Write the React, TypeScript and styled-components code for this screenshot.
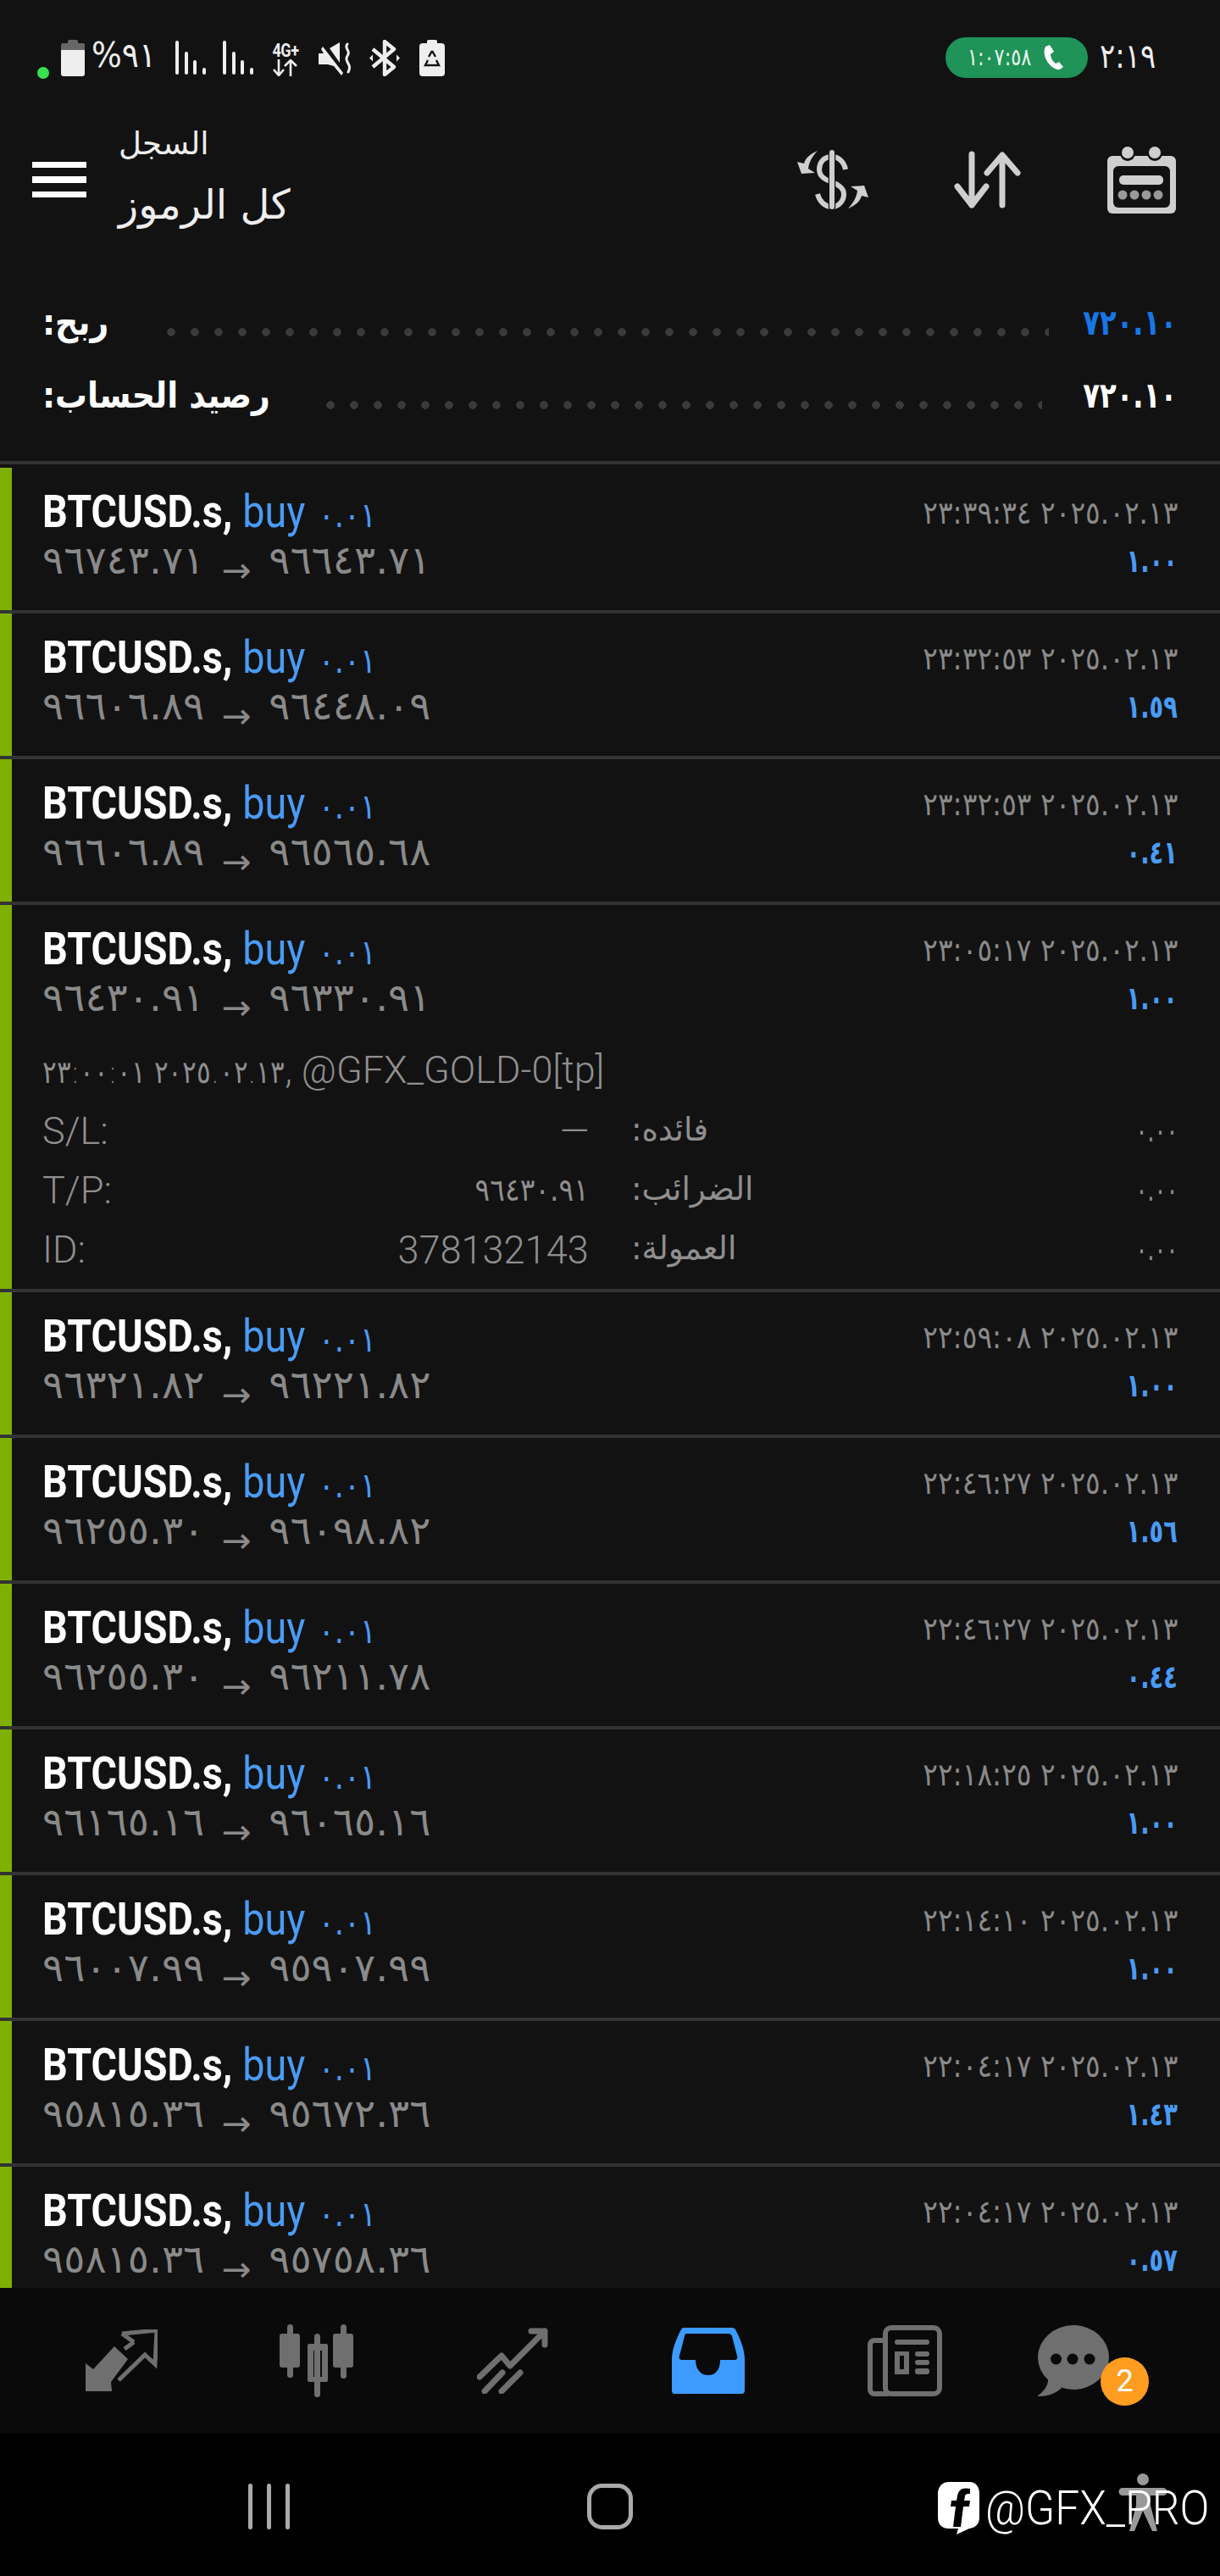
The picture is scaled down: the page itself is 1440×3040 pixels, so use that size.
import React from "react";
import styled, { createGlobalStyle } from "styled-components";

const Global = createGlobalStyle`
  html, body { margin: 0; padding: 0; background: #000; }
  body { font-family: Roboto, "DejaVu Sans", sans-serif; }
`;

const Page = styled.div`
  width: 1440px;
  height: 3040px;
  position: relative;
  display: flex;
  flex-direction: column;
  overflow: hidden;
  background: #121212;
  color: #fff;
`;

/* squeezed text: the reference uses a condensed face */
const Num = styled.span<{ $sx?: number; $right?: boolean }>`
  display: inline-block;
  white-space: nowrap;
  direction: ltr;
  unicode-bidi: bidi-override;
  font-family: "DejaVu Sans", sans-serif;
  transform: scaleX(${(p) => p.$sx ?? 0.8});
  transform-origin: ${(p) => (p.$right ? "right" : "left")} center;
`;

const StatusBar = styled.div`
  height: 132px;
  display: flex;
  align-items: flex-start;
  justify-content: space-between;
  padding: 44px 74px 0 44px;
  box-sizing: border-box;
  flex: none;
`;
const StatusGroup = styled.div`
  display: flex;
  align-items: flex-start;
`;
const Slot = styled.div<{ $ml: number; $mt?: number }>`
  margin-left: ${(p) => p.$ml}px;
  margin-top: ${(p) => p.$mt ?? 3}px;
  display: flex;
  svg { display: block; }
`;
const Percent = styled(Num)`
  font-size: 41px;
  line-height: 40px;
  color: #eee;
  width: 75px;
`;
const FourG = styled.div`
  width: 42px;
  display: flex;
  flex-direction: column;
  align-items: center;
  font: 700 22px/20px Roboto, sans-serif;
  color: #eee;
`;
const FourGText = styled.span`
  display: inline-block;
  transform: scaleX(0.82);
  letter-spacing: -0.5px;
`;
const Pill = styled.div`
  width: 168px;
  height: 48px;
  border-radius: 24px;
  background: #1f9358;
  display: flex;
  align-items: center;
  gap: 16px;
  padding-left: 26px;
  box-sizing: border-box;
  svg { flex: none; display: block; }
`;
const PillTime = styled(Num)`
  font-size: 28px;
  line-height: 48px;
  width: 74px;
  color: #e8f5ee;
`;
const Clock = styled(Num)`
  margin-left: 14px;
  width: 68px;
  font-size: 40px;
  line-height: 44px;
  color: #eee;
`;

const Header = styled.div`
  height: 146px;
  flex: none;
  display: flex;
  align-items: center;
  padding: 0 52px 0 38px;
  box-sizing: border-box;
`;
const Burger = styled.div`
  width: 64px;
  display: flex;
  flex-direction: column;
  gap: 10px;
  margin: 14px 38px 0 0;
`;
const BurgerBar = styled.span`
  height: 7.5px;
  background: #fff;
`;
const Titles = styled.div`
  flex: 1;
  align-self: flex-start;
  padding-top: 15px;
  display: flex;
  flex-direction: column;
  align-items: flex-start;
  font-family: "DejaVu Sans", sans-serif;
  direction: ltr;
`;
const TitleSmall = styled.div`
  font-size: 37px;
  line-height: 46px;
  margin-bottom: 10px;
  color: #eee;
`;
const TitleBig = styled.div`
  font-size: 48px;
  line-height: 76px;
  color: #eee;
`;
const HeadIcons = styled.div`
  display: flex;
  align-items: center;
  padding-top: 14px;
  svg { display: block; }
`;

const SummaryWrap = styled.div`
  flex: none;
  height: 266px;
  box-sizing: border-box;
  padding: 60px 51px 0 50px;
  display: flex;
  flex-direction: column;
`;
const SumRow = styled.div`
  height: 86px;
  display: flex;
  align-items: center;
`;
const SumLabel = styled.div`
  direction: rtl;
  font: 700 42px/50px "DejaVu Sans", sans-serif;
  color: #fff;
  white-space: nowrap;
  transform: scaleX(0.9);
  transform-origin: left center;
`;
const Leader = styled.div<{ $l: number; $r: number }>`
  flex: 1;
  height: 10px;
  margin: 22px ${(p) => p.$r}px 0 ${(p) => p.$l}px;
  background-image: radial-gradient(circle at 5px 5px, #3a3a3a 4.5px, transparent 5px);
  background-size: 28px 10px;
  background-repeat: repeat-x;
`;
const SumValue = styled(Num)<{ $blue?: boolean }>`
  font-size: 42px;
  line-height: 50px;
  font-weight: 700;
  color: ${(p) => (p.$blue ? "#1677e8" : "#fff")};
`;
const Rule = styled.div`
  height: 4px;
  background: #333;
  flex: none;
`;
const List = styled.div`
  flex: 1;
  min-height: 0;
  overflow: hidden;
  padding-top: 4px;
`;
const Row = styled.div`
  background: linear-gradient(#7fb000, #7fb000) left top / 14px 100% no-repeat;
  background-origin: padding-box;
  border-bottom: 4px solid #333;
  padding: 24px 50px 0 50px;
  box-sizing: border-box;
  min-height: 172px;
  &:last-child { border-bottom: none; }
`;
const Line = styled.div<{ $h: number }>`
  display: flex;
  justify-content: space-between;
  align-items: center;
  height: ${(p) => p.$h}px;
`;
const Symbol = styled.span`
  display: inline-block;
  white-space: nowrap;
  font: 700 54px/60px Roboto, sans-serif;
  color: #fff;
  transform: scaleX(0.864);
  transform-origin: left center;
`;
const Buy = styled.span`
  font-weight: 400;
  color: #4a9bf5;
  margin-left: 14px;
`;
const Lot = styled.span`
  font: 400 41px/60px "DejaVu Sans", sans-serif;
  color: #4a9bf5;
  margin-left: 18px;
  direction: ltr;
  unicode-bidi: bidi-override;
`;
const DateText = styled(Num)`
  font-size: 37px;
  line-height: 56px;
  color: #8a8a8a;
`;
const Prices = styled(Num)`
  font-size: 46px;
  line-height: 56px;
  color: #8a8a8a;
`;
const Arrow = styled.span`
  display: inline-block;
  margin: 0 20px;
  font-size: 41px;
  transform: translateY(10px);
`;
const Profit = styled(Num)`
  font-size: 38px;
  line-height: 56px;
  font-weight: 700;
  color: #4a9bf5;
`;
const Details = styled.div`
  padding: 32px 0 11px;
  color: #8f8f8f;
`;
const Comment = styled.div`
  height: 56px;
  margin-bottom: 8px;
  display: flex;
  align-items: center;
  font: 300 45px/56px Roboto, sans-serif;
`;
const CommentInner = styled.span`
  display: inline-block;
  white-space: nowrap;
`;
const CommentDate = styled(Num)`
  font-size: 37px;
  line-height: 56px;
  margin-right: -54px;
`;
const DetailGrid = styled.div`
  display: grid;
  grid-template-columns: 645px 645px;
  column-gap: 50px;
  grid-auto-rows: 70px;
`;
const Cell = styled.div`
  display: flex;
  justify-content: space-between;
  align-items: center;
`;
const LatinLabel = styled.span`
  display: inline-block;
  font: 300 45px/60px Roboto, sans-serif;
`;
const LatinValue = styled.span`
  display: inline-block;
  font: 300 46px/60px Roboto, sans-serif;
  transform: scaleX(0.98);
  transform-origin: right center;
`;
const ArabicLabel = styled.span`
  direction: rtl;
  display: inline-block;
  margin-bottom: 5px;
  font: 400 38px/60px "DejaVu Sans", sans-serif;
  transform: scaleX(0.98);
  transform-origin: left center;
`;
const DetailNum = styled(Num)`
  font-size: 37px;
  line-height: 60px;
`;

const TabBar = styled.div`
  height: 172px;
  flex: none;
  background: #0a0a0a;
  display: flex;
  align-items: center;
  padding-left: 101px;
  box-sizing: border-box;
`;
const Tab = styled.div<{ $ml: number; $mt?: number }>`
  position: relative;
  margin-left: ${(p) => p.$ml}px;
  margin-top: ${(p) => p.$mt ?? 0}px;
  svg { display: block; }
`;
const Badge = styled.div`
  position: absolute;
  left: 74px;
  top: 38px;
  width: 57px;
  height: 57px;
  border-radius: 50%;
  background: #ff9d20;
  color: #fff;
  font: 400 36px/57px Roboto, sans-serif;
  text-align: center;
`;
const NavBar = styled.div`
  height: 168px;
  flex: none;
  background: #000;
  display: flex;
  align-items: center;
  padding: 4px 0 0 293px;
  box-sizing: border-box;
  svg { display: block; }
`;
const Watermark = styled.div`
  position: absolute;
  left: 1107px;
  top: 2928px;
  display: flex;
  align-items: center;
  gap: 7px;
  svg { display: block; }
`;
const WatermarkText = styled.span`
  display: inline-block;
  font: 300 56px/64px Roboto, sans-serif;
  color: #fff;
  white-space: nowrap;
  transform: scaleX(0.92);
  transform-origin: left center;
`;

const G = "#6f6f6f";
const L = "#cfcfcf";

const Battery = () => (
  <svg width="28" height="43" viewBox="0 0 28 43">
    <rect x="8" y="0" width="12" height="6" rx="2" fill="#666" />
    <path d="M2 4h24a2 2 0 0 1 2 2v6H0V6a2 2 0 0 1 2-2z" fill="#666" />
    <path d="M0 12h28v28a3 3 0 0 1-3 3H3a3 3 0 0 1-3-3z" fill="#eee" />
  </svg>
);
const Signal = () => (
  <svg width="36" height="40" viewBox="0 0 36 40" fill="#eee">
    <rect x="0" y="0" width="4" height="40" rx="2" />
    <rect x="11" y="13" width="4" height="27" rx="2" />
    <rect x="21" y="23" width="4" height="17" rx="2" />
    <rect x="32" y="32" width="4" height="8" rx="2" />
  </svg>
);
const UpDownSmall = () => (
  <svg width="32" height="20" viewBox="0 0 32 20" fill="none" stroke="#eee" strokeWidth="2.6">
    <path d="M8 0v18M2 12l6 7 6-7M22 20V2M15 8l7-7 7 7" />
  </svg>
);
const Mute = () => (
  <svg width="40" height="40" viewBox="0 0 40 40">
    <path d="M0 13h6L3 8l2-3 24 31-2 3-9-11-7-2H0z" fill="#eee" />
    <path d="M13 7l12-7v24z" fill="#eee" />
    <path d="M34 2c-4 5 3 7 1 12-2 4-3 5-1 9s4 6 1 12" fill="none" stroke="#eee" strokeWidth="3" strokeLinecap="round" />
  </svg>
);
const Bluetooth = () => (
  <svg width="36" height="43" viewBox="0 0 36 43" fill="none" stroke="#eee" strokeWidth="4.4" strokeLinejoin="round">
    <path d="M4 11l25 21-11 9V2l11 9L4 32" />
    <path d="M0 21.5l4-4v8zM36 21.5l-4-4v8z" fill="#eee" stroke="none" />
  </svg>
);
const Saver = () => (
  <svg width="30" height="43" viewBox="0 0 30 43">
    <rect x="9" y="0" width="12" height="6" rx="2" fill="#eee" />
    <rect x="0" y="4" width="30" height="39" rx="4" fill="#eee" />
    <path d="M15 13l-4 7M12 30H7l3-6M18 30h5l-3-6M15 13l4 7" fill="none" stroke="#121212" strokeWidth="2.4" />
    <path d="M12 30h6" stroke="#121212" strokeWidth="2.4" />
  </svg>
);
const Phone = () => (
  <svg width="24" height="30" viewBox="0 0 24 30">
    <path d="M2 2l5-2 5 8-4 3c0 4 3 9 6 11l4-2 5 6-4 3C10 31-4 14 2 2z" fill="#fff" />
  </svg>
);
const Dollar = () => (
  <svg width="84" height="70" viewBox="0 0 84 70" fill={L}>
    <path d="M57 23C55 13 48 8 41 8 30 8 26 16 26 23c0 9 8 12 15 15 8 3 14 7 14 14 0 9-7 15-14 15-9 0-15-7-17-15" fill="none" stroke={L} strokeWidth="6" />
    <rect x="38" y="0" width="6" height="70" rx="3" stroke="#121212" strokeWidth="2.5" paintOrder="stroke" />
    <path d="M24 1C15 5 10 9 8 16L0 14l5 14 16-1-8-5c1-8 5-15 11-21z" />
    <path d="M60 69c9-4 14-8 16-15l8 2-5-14-16 1 8 5c-1 8-5 15-11 21z" />
  </svg>
);
const Sort = () => (
  <svg width="80" height="68" viewBox="0 0 80 68" fill="none" stroke={L} strokeWidth="7" strokeLinecap="round" strokeLinejoin="round">
    <path d="M21 4v60M4 42l17 22 17-22" />
    <path d="M57 64V5M39 26L57 5l18 21" />
  </svg>
);
const Calendar = () => (
  <svg width="81" height="80" viewBox="0 0 81 80">
    <rect x="0" y="12" width="81" height="68" rx="6" fill={L} />
    <rect x="7" y="24" width="67" height="49" rx="6" fill="#121212" />
    <circle cx="24" cy="9" r="9" fill="#121212" />
    <circle cx="56" cy="9" r="9" fill="#121212" />
    <circle cx="24" cy="8" r="7" fill={L} />
    <circle cx="56" cy="8" r="7" fill={L} />
    <rect x="14" y="35" width="52" height="11" rx="5" fill={L} />
    {[18, 32, 46, 60].map((x) => (
      <circle key={x} cx={x} cy="58" r="5.5" fill="#999" />
    ))}
  </svg>
);

const TradeIcon = () => (
  <svg width="85" height="74" viewBox="0 0 85 74" fill={G}>
    <path d="M0 73V40l9 7 25-27 16 15-20 27 1 11z" />
    <path d="M43 5l41-4-2 40-12-11-31 30M57 15L46 23M43 5l14 10" fill="none" stroke={G} strokeWidth="5" />
  </svg>
);
const Candles = () => (
  <svg width="88" height="86" viewBox="0 0 88 86" fill={G}>
    <rect x="9" y="0" width="7" height="63" rx="3.5" />
    <rect x="0" y="11" width="24" height="40" rx="3" />
    <rect x="41" y="11" width="7" height="75" rx="3.5" />
    <path fillRule="evenodd" d="M35 23h20a2 2 0 0 1 2 2v41a2 2 0 0 1-2 2H35a2 2 0 0 1-2-2V25a2 2 0 0 1 2-2zm5 8v31h10V31z" />
    <rect x="72" y="0" width="7" height="64" rx="3.5" />
    <rect x="63" y="11" width="24" height="40" rx="3" />
  </svg>
);
const Trend = () => (
  <svg width="84" height="78" viewBox="0 0 84 78" fill="none" stroke={G} strokeWidth="7" strokeLinecap="round" strokeLinejoin="round">
    <path d="M3 58L29 33l10 12L80 4M64 4h16v16" />
    <path d="M9 75L30 53M29 75l22-22" />
  </svg>
);
const Tray = () => (
  <svg width="86" height="78" viewBox="0 0 86 78">
    <path fillRule="evenodd" fill="#3d9bff" d="M14 0h57c3 0 4 2 5 4 5 10 10 22 10 34v36c0 2-1 4-4 4H3c-2 0-3-2-3-4V38C0 26 5 14 10 4c1-2 2-4 4-4zm4 7c-2 0-3 1-3 3L9 33c-1 3 0 5 3 5h16c0 11 6 18 15 18s14-7 14-18h17c3 0 4-2 3-5l-6-23c-1-2-2-3-4-3z" />
  </svg>
);
const News = () => (
  <svg width="88" height="84" viewBox="0 0 88 84">
    <g fill="none" stroke={G} strokeWidth="6">
      <rect x="21" y="3" width="64" height="78" rx="7" />
      <path d="M21 18H8a5 5 0 0 0-5 5v53a5 5 0 0 0 5 5h17" />
    </g>
    <g fill={G}>
      <rect x="32" y="17" width="41" height="6" rx="3" />
      <path fillRule="evenodd" d="M32 31h17v27H32zm6 5v16h5V36z" />
      <rect x="56" y="31" width="17" height="6" rx="3" />
      <rect x="56" y="41" width="17" height="6" rx="3" />
      <rect x="56" y="51" width="17" height="7" rx="3" />
    </g>
  </svg>
);
const Chat = () => (
  <svg width="84" height="84" viewBox="0 0 84 84">
    <ellipse cx="42" cy="38" rx="42" ry="38" fill={G} />
    <path d="M12 62c1 8-4 16-12 21-1 1 0 1 1 1 10 0 20-3 27-10z" fill={G} />
    <circle cx="21.5" cy="40" r="6.5" fill="#0a0a0a" />
    <circle cx="41" cy="40" r="6.5" fill="#0a0a0a" />
    <circle cx="61" cy="40" r="6.5" fill="#0a0a0a" />
  </svg>
);

const Back = () => (
  <svg width="50" height="54" viewBox="0 0 50 54" fill="#aaa">
    <rect x="0" y="0" width="5" height="54" rx="2.5" />
    <rect x="22" y="0" width="5" height="54" rx="2.5" />
    <rect x="44" y="0" width="5" height="54" rx="2.5" />
  </svg>
);
const Home = () => (
  <svg width="54" height="54" viewBox="0 0 54 54">
    <rect x="2.5" y="2.5" width="49" height="49" rx="15" fill="none" stroke="#aaa" strokeWidth="5" />
  </svg>
);
const Access = () => (
  <svg width="58" height="70" viewBox="0 0 58 70" fill="#999">
    <circle cx="29" cy="7" r="7" />
    <path d="M5 17h48a4 4 0 0 1 0 9H38v12l8 30h-6L29 44 19 68h-6l8-30V26H5a4 4 0 0 1 0-9z" />
  </svg>
);
const Fb = () => (
  <svg width="49" height="62" viewBox="0 0 49 62">
    <path fillRule="evenodd" fill="#fff" d="M13 0h24c8 0 12 6 12 14v28c0 8-5 12-12 13l-15 7 2-7H13C4 55 0 49 0 42V14C0 6 5 0 13 0z" />
    <path d="M38 8c-9-2-14 1-15 9l-1 5h-6l-1 7h6l-3 24h9l3-24h7l1-7h-7l1-5c0-3 3-3 6-3z" fill="#000" />
  </svg>
);

type Trade = { open: string; close: string; date: string; profit: string };
const D = "٢٠٢٥.٠٢.١٣";
const trades: Trade[] = [
  { open: "٩٦٧٤٣.٧١", close: "٩٦٦٤٣.٧١", date: `٢٣:٣٩:٣٤ ${D}`, profit: "١.٠٠" },
  { open: "٩٦٦٠٦.٨٩", close: "٩٦٤٤٨.٠٩", date: `٢٣:٣٢:٥٣ ${D}`, profit: "١.٥٩" },
  { open: "٩٦٦٠٦.٨٩", close: "٩٦٥٦٥.٦٨", date: `٢٣:٣٢:٥٣ ${D}`, profit: "٠.٤١" },
  { open: "٩٦٤٣٠.٩١", close: "٩٦٣٣٠.٩١", date: `٢٣:٠٥:١٧ ${D}`, profit: "١.٠٠" },
  { open: "٩٦٣٢١.٨٢", close: "٩٦٢٢١.٨٢", date: `٢٢:٥٩:٠٨ ${D}`, profit: "١.٠٠" },
  { open: "٩٦٢٥٥.٣٠", close: "٩٦٠٩٨.٨٢", date: `٢٢:٤٦:٢٧ ${D}`, profit: "١.٥٦" },
  { open: "٩٦٢٥٥.٣٠", close: "٩٦٢١١.٧٨", date: `٢٢:٤٦:٢٧ ${D}`, profit: "٠.٤٤" },
  { open: "٩٦١٦٥.١٦", close: "٩٦٠٦٥.١٦", date: `٢٢:١٨:٢٥ ${D}`, profit: "١.٠٠" },
  { open: "٩٦٠٠٧.٩٩", close: "٩٥٩٠٧.٩٩", date: `٢٢:١٤:١٠ ${D}`, profit: "١.٠٠" },
  { open: "٩٥٨١٥.٣٦", close: "٩٥٦٧٢.٣٦", date: `٢٢:٠٤:١٧ ${D}`, profit: "١.٤٣" },
  { open: "٩٥٨١٥.٣٦", close: "٩٥٧٥٨.٣٦", date: `٢٢:٠٤:١٧ ${D}`, profit: "٠.٥٧" },
];

const TradeRow = ({ t, expanded }: { t: Trade; expanded?: boolean }) => (
  <Row>
    <Line $h={60}>
      <Symbol>
        BTCUSD.s,<Buy>buy</Buy>
        <Lot>٠.٠١</Lot>
      </Symbol>
      <DateText $sx={0.89} $right>{t.date}</DateText>
    </Line>
    <Line $h={52}>
      <Prices $sx={1.02}>
        {t.open}
        <Arrow>→</Arrow>
        {t.close}
      </Prices>
      <Profit $sx={0.72} $right>{t.profit}</Profit>
    </Line>
    {expanded && (
      <Details>
        <Comment>
          <CommentInner>
            <CommentDate $sx={0.84}>٢٣:٠٠:٠١ ٢٠٢٥.٠٢.١٣</CommentDate>, @GFX_GOLD-0[tp]
          </CommentInner>
        </Comment>
        <DetailGrid>
          <Cell>
            <LatinLabel>S/L:</LatinLabel>
            <LatinValue>—</LatinValue>
          </Cell>
          <Cell>
            <ArabicLabel>فائده:</ArabicLabel>
            <DetailNum $sx={0.7} $right>٠.٠٠</DetailNum>
          </Cell>
          <Cell>
            <LatinLabel>T/P:</LatinLabel>
            <DetailNum $sx={0.89} $right>٩٦٤٣٠.٩١</DetailNum>
          </Cell>
          <Cell>
            <ArabicLabel>الضرائب:</ArabicLabel>
            <DetailNum $sx={0.7} $right>٠.٠٠</DetailNum>
          </Cell>
          <Cell>
            <LatinLabel>ID:</LatinLabel>
            <LatinValue>378132143</LatinValue>
          </Cell>
          <Cell>
            <ArabicLabel>العمولة:</ArabicLabel>
            <DetailNum $sx={0.7} $right>٠.٠٠</DetailNum>
          </Cell>
        </DetailGrid>
      </Details>
    )}
  </Row>
);

const StatusDot = styled.div`
  width: 14px;
  height: 14px;
  border-radius: 50%;
  background: #39e04f;
  margin-top: 35px;
`;

export default function App() {
  return (
    <Page>
      <Global />
      <StatusBar>
        <StatusGroup>
          <StatusDot />
          <Slot $ml={14}><Battery /></Slot>
          <Slot $ml={8} $mt={1}><Percent $sx={0.92}>%٩١</Percent></Slot>
          <Slot $ml={24} $mt={4}><Signal /></Slot>
          <Slot $ml={20} $mt={4}><Signal /></Slot>
          <Slot $ml={17} $mt={6}>
            <FourG>
              <FourGText>4G+</FourGText>
              <UpDownSmall />
            </FourG>
          </Slot>
          <Slot $ml={18} $mt={6}><Mute /></Slot>
          <Slot $ml={20}><Bluetooth /></Slot>
          <Slot $ml={23}><Saver /></Slot>
        </StatusGroup>
        <StatusGroup>
          <Pill>
            <PillTime $sx={0.8}>١:٠٧:٥٨</PillTime>
            <Phone />
          </Pill>
          <Clock $sx={0.85}>٢:١٩</Clock>
        </StatusGroup>
      </StatusBar>
      <Header>
        <Burger>
          <BurgerBar />
          <BurgerBar />
          <BurgerBar />
        </Burger>
        <Titles>
          <TitleSmall>السجل</TitleSmall>
          <TitleBig>كل الرموز</TitleBig>
        </Titles>
        <HeadIcons>
          <Dollar />
          <Tab $ml={101}><Sort /></Tab>
          <Tab $ml={101}><Calendar /></Tab>
        </HeadIcons>
      </Header>
      <SummaryWrap>
        <SumRow>
          <SumLabel>ربح:</SumLabel>
          <Leader $l={60} $r={7} />
          <SumValue $blue $sx={0.77} $right>٧٢٠.١٠</SumValue>
        </SumRow>
        <SumRow>
          <SumLabel>رصيد الحساب:</SumLabel>
          <Leader $l={36} $r={15} />
          <SumValue $sx={0.77} $right>٧٢٠.١٠</SumValue>
        </SumRow>
      </SummaryWrap>
      <Rule />
      <List>
        {trades.map((t, i) => (
          <TradeRow key={i} t={t} expanded={i === 3} />
        ))}
      </List>
      <TabBar>
        <Tab $ml={0}><TradeIcon /></Tab>
        <Tab $ml={144}><Candles /></Tab>
        <Tab $ml={145}><Trend /></Tab>
        <Tab $ml={146}><Tray /></Tab>
        <Tab $ml={145}><News /></Tab>
        <Tab $ml={113}>
          <Chat />
          <Badge>2</Badge>
        </Tab>
      </TabBar>
      <NavBar>
        <Back />
        <Tab $ml={350}><Home /></Tab>
        <Tab $ml={573} $mt={-8}><Access /></Tab>
      </NavBar>
      <Watermark>
        <Fb />
        <WatermarkText>@GFX_PRO</WatermarkText>
      </Watermark>
    </Page>
  );
}
